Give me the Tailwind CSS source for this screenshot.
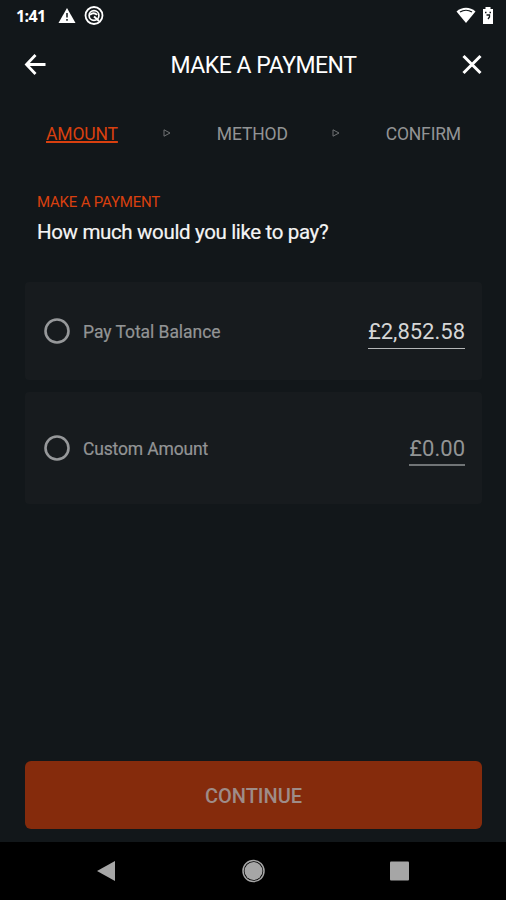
<!DOCTYPE html>
<html lang="en">
<head>
<meta charset="utf-8">
<title>Make a payment</title>
<script src="https://cdn.jsdelivr.net/npm/@tailwindcss/browser@4"></script>
</head>
<body class="bg-[#12171a]">
<div class="w-[506px] h-[900px] flex flex-col overflow-hidden bg-[#12171a] font-['Roboto',sans-serif] whitespace-nowrap">
  <div class="h-8 shrink-0 flex items-center pl-4 pr-3 text-white">
    <span class="w-[30px] text-[16px] leading-8 font-bold tracking-[-0.6px] font-['Open_Sans',sans-serif]">1:41</span>
    <svg class="ml-3 w-[18px] h-[16px]" viewBox="0 0 18 16"><path d="M9 0 17.500 15H.5Z" fill="#fff"/><path d="M9 5v4.500M9 11v1.700" stroke="#12171a" stroke-width="1.500"/></svg>
    <svg class="ml-2 w-5 h-5" viewBox="0 0 20 20" fill="none" stroke="#fff"><circle cx="10" cy="9.500" r="8.500" stroke-width="1.800"/><circle cx="10" cy="9.500" r="4.900" stroke-width="1.700"/><path d="m10 10.500 5 4.500M6 9c2-2.500 5-2.500 7 0" stroke-width="2"/></svg>
    <svg class="ml-auto w-[20px] h-[18px]" viewBox="0 0 20 18"><path d="M.5 4.500C6-.5 14-.5 19.500 4.500L10 16Z" fill="#fff"/><path d="M4 5c3.500-2.300 8.500-2.300 12 0" fill="none" stroke="#12171a" stroke-width="1.300"/></svg>
    <svg class="ml-[6px] w-3 h-[18px]" viewBox="0 0 12 18"><path d="M3.500 0h5v2H11v15H1V2h2.500Z" fill="#fff"/><path d="M3 5.500h1.500M7.500 5.500h1.500M4.500 8h3v2L6 12" fill="none" stroke="#12171a" stroke-width="1.300"/></svg>
  </div>
  <header class="h-[66px] shrink-0 flex items-center justify-between pl-[23px] pr-[22px]">
    <svg class="w-6 h-6" viewBox="0 0 24 24" fill="none" stroke="#fff" stroke-width="2.800"><path d="M12.500 2 3.500 11.500l9 9.500M3.500 11.500h19"/></svg>
    <h1 class="ml-[20px] mt-px text-[23px] leading-8 text-white tracking-[-0.5px]">MAKE A PAYMENT</h1>
    <svg class="w-6 h-6" viewBox="0 0 24 24" fill="none" stroke="#fff" stroke-width="3"><path d="m3.500 3 17 17M20.500 3l-17 17"/></svg>
  </header>
  <nav class="h-[70px] shrink-0 flex items-center justify-between pl-[46px] pr-[45px] text-[17.5px] leading-6 text-[#929495]">
    <span class="w-[72px] mt-px h-6 text-[#d9400f] tracking-[-0.15px] underline underline-offset-[1px] decoration-2 [text-decoration-skip-ink:none]">AMOUNT</span>
    <svg class="w-2 h-2" viewBox="0 0 8 8"><path d="M1 .8 7 4 1 7.200Z" fill="none" stroke="#707374"/></svg>
    <span class="mt-[2px] -mr-px tracking-[-0.15px]">METHOD</span>
    <svg class="w-2 h-2" viewBox="0 0 8 8"><path d="M1 .8 7 4 1 7.200Z" fill="none" stroke="#707374"/></svg>
    <span class="mt-[2px] tracking-[-0.15px]">CONFIRM</span>
  </nav>
  <main class="grow flex flex-col pl-[25px] pr-[24px] pt-[24px] pb-[13px]">
    <p class="ml-[12px] text-[15px] leading-5 tracking-[-0.2px] text-[#d9400f]">MAKE A PAYMENT</p>
    <h2 class="ml-[12px] mt-1 text-[20.5px] leading-8 tracking-[-0.35px] text-[#f5f5f5] [-webkit-text-stroke:0.2px_#f5f5f5]">How much would you like to pay?</h2>
    <div class="mt-[34px] h-[98px] rounded bg-[#171b1e] flex items-center pl-[18px] pr-[17px]">
      <svg class="w-7 h-7" viewBox="0 0 28 28"><circle cx="14" cy="14" r="11.500" fill="none" stroke="#96989a" stroke-width="2.600"/></svg>
      <span class="ml-3 mt-[2px] text-[17.5px] leading-6 tracking-[-0.05px] text-[#929495] [-webkit-text-stroke:0.2px_#929495]">Pay Total Balance</span>
      <span class="ml-auto mt-[1px] h-[34px] border-b border-[#b5b7b8] text-[22px] leading-[34px] text-[#d5d6d6]">£2,852.58</span>
    </div>
    <div class="mt-[12px] h-[112px] rounded bg-[#171b1e] flex items-center pl-[18px] pr-[17px]">
      <svg class="w-7 h-7" viewBox="0 0 28 28"><circle cx="14" cy="14" r="11.500" fill="none" stroke="#96989a" stroke-width="2.600"/></svg>
      <span class="ml-3 mt-[2px] text-[17.5px] leading-6 tracking-[-0.15px] text-[#929495] [-webkit-text-stroke:0.2px_#929495]">Custom Amount</span>
      <span class="ml-auto mt-[1px] h-[34px] border-b-2 border-[#707476] text-[22px] leading-[34px] text-[#929495]">£0.00</span>
    </div>
    <button class="mt-auto h-[68px] pt-[2px] rounded-md bg-[#852b0c] text-[20px] font-medium text-[#9e8c88]">CONTINUE</button>
  </main>
  <div class="h-[58px] shrink-0 bg-black flex items-center justify-between px-[95px]">
    <svg class="w-[22px] h-[22px]" viewBox="0 0 22 22"><path d="M2 11 20 1v20Z" fill="#a6a6a6"/></svg>
    <svg class="w-6 h-6" viewBox="0 0 24 24"><circle cx="12.500" cy="12" r="9" fill="#a6a6a6"/><circle cx="12.500" cy="12" r="10.500" fill="none" stroke="#a6a6a6" stroke-width="1.500"/></svg>
    <svg class="w-[22px] h-[22px]" viewBox="0 0 22 22"><rect x="1" y="1.500" width="19" height="19" rx="1" fill="#a6a6a6"/></svg>
  </div>
</div>
</body>
</html>
